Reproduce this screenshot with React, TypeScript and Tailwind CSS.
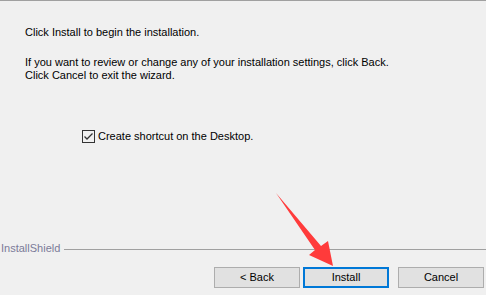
const buttons = [
  { label: "< Back", primary: false },
  { label: "Install", primary: true },
  { label: "Cancel", primary: false },
];

const App = () => {
  return (
    <div
      className="relative w-[486px] h-[295px] bg-[#f0f0f0] border-t border-[#a0a0a0] text-[11px] leading-[13px] text-black flex flex-col overflow-hidden"
      style={{ fontFamily: '"Liberation Sans", Arial, sans-serif' }}
    >
      {/* Body text */}
      <div className="pl-[25px] pt-[25px]">
        <p>Click Install to begin the installation.</p>
        <p className="mt-[17px]">
          If you want to review or change any of your installation settings, click Back.
        </p>
        <p>Click Cancel to exit the wizard.</p>
      </div>

      <label className="flex items-center ml-[82px] mt-[48px] gap-[3px]">
        <span className="w-[13px] h-[13px] border border-[#333333] bg-[#f0f0f0] flex items-center justify-center">
          <svg width="11" height="11" viewBox="0 0 11 11">
            <path d="M1.5 5.5 L4 8 L9.5 2.5" fill="none" stroke="#333333" strokeWidth="1.3" />
          </svg>
        </span>
        <span>Create shortcut on the Desktop.</span>
      </label>

      <div className="flex-1" />

      {/* Footer */}
      <div className="flex items-center gap-[4px]">
        <span className="text-[#7b7b99] pl-px">InstallShield</span>
        <div className="flex-1 h-px bg-[#a0a0a0] mt-[2px]" />
      </div>
      <div className="flex justify-end gap-[3px] pr-[2px] mt-[12px] mb-[7px]">
        {buttons.map((b, i) => (
          <button
            key={b.label}
            className={`w-[86px] h-[21px] bg-[#e1e1e1] flex items-center justify-center ${
              b.primary ? "border-2 border-[#0078d7]" : "border border-[#adadad]"
            } ${i === 2 ? "ml-[6px]" : ""}`}
          >
            {b.label}
          </button>
        ))}
      </div>

      {/* Red annotation arrow */}
      <svg
        className="absolute left-0 top-0 pointer-events-none"
        width="486"
        height="295"
        viewBox="0 0 486 295"
      >
        <polygon
          points="276,192 321,245 328,240 333,265 309,254 315,249"
          fill="#ff3b3b"
        />
      </svg>
    </div>
  );
};

export default App;
